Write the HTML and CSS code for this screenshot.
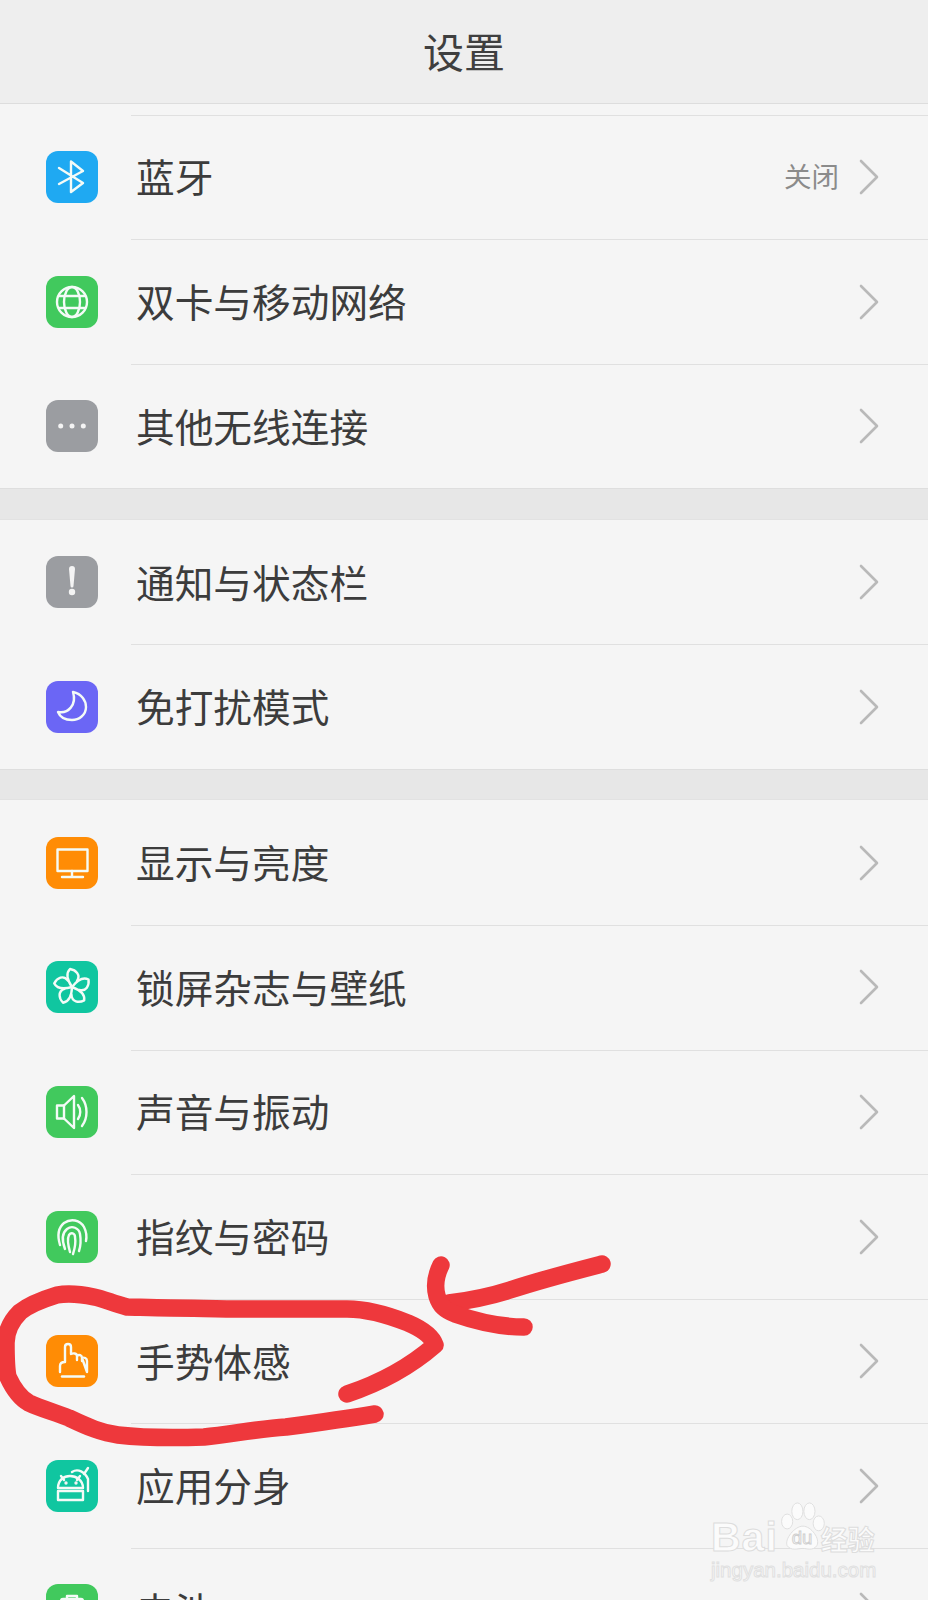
FILE: index.html
```html
<!DOCTYPE html>
<html lang="zh-CN">
<head>
  <meta charset="UTF-8" />
  <title>设置</title>
  <link rel="stylesheet" href="styles.css">
</head>
<body>
  <div class="screen">
    <header class="titlebar">设置</header>
    <div class="top-strip"></div>

    <section class="group">
      <div class="row">
        <span class="icon blue"><svg viewBox="0 0 52 52"><path d="M13 17 37 32 25 41V10.500L37 20 13 33"/></svg></span>
        <span class="label">蓝牙</span>
        <span class="value">关闭</span>
        <svg class="chevron" viewBox="0 0 20 36"><path d="M2 2 18 18 2 34"/></svg>
      </div>
      <div class="row">
        <span class="icon green"><svg viewBox="0 0 52 52"><circle cx="26" cy="26" r="15"/><ellipse cx="26" cy="26" rx="8" ry="15"/><path d="M13 20H39M13 32H39"/></svg></span>
        <span class="label">双卡与移动网络</span>
        <svg class="chevron" viewBox="0 0 20 36"><path d="M2 2 18 18 2 34"/></svg>
      </div>
      <div class="row">
        <span class="icon gray"><svg viewBox="0 0 52 52"><g class="solid"><circle cx="14.700" cy="26" r="2.500"/><circle cx="26" cy="26" r="2.500"/><circle cx="37.300" cy="26" r="2.500"/></g></svg></span>
        <span class="label">其他无线连接</span>
        <svg class="chevron" viewBox="0 0 20 36"><path d="M2 2 18 18 2 34"/></svg>
      </div>
    </section>

    <section class="group">
      <div class="row">
        <span class="icon gray"><svg viewBox="0 0 52 52"><g class="solid"><path d="M23 13a3 3 0 0 1 6 0L27.500 30a1.500 1.500 0 0 1-3 0Z"/><circle cx="26" cy="36" r="3.200"/></g></svg></span>
        <span class="label">通知与状态栏</span>
        <svg class="chevron" viewBox="0 0 20 36"><path d="M2 2 18 18 2 34"/></svg>
      </div>
      <div class="row">
        <span class="icon violet"><svg viewBox="0 0 52 52"><path d="M27 11C36 13 40 20 40 26 40 34 33 39 26 39 19 39 14 36 12 31 22 33 31 24 27 11Z"/></svg></span>
        <span class="label">免打扰模式</span>
        <svg class="chevron" viewBox="0 0 20 36"><path d="M2 2 18 18 2 34"/></svg>
      </div>
    </section>

    <section class="group">
      <div class="row">
        <span class="icon orange"><svg viewBox="0 0 52 52"><rect x="11.500" y="12.500" width="30" height="21.500"/><path d="M26 34V40M16 40H37"/></svg></span>
        <span class="label">显示与亮度</span>
        <svg class="chevron" viewBox="0 0 20 36"><path d="M2 2 18 18 2 34"/></svg>
      </div>
      <div class="row">
        <span class="icon teal"><svg viewBox="0 0 52 52"><path d="M26 26C22 20 19 13 24 8 30 9 35 14 31 20"/><path transform="rotate(72 26 26)" d="M26 26C22 20 19 13 24 8 30 9 35 14 31 20"/><path transform="rotate(144 26 26)" d="M26 26C22 20 19 13 24 8 30 9 35 14 31 20"/><path transform="rotate(216 26 26)" d="M26 26C22 20 19 13 24 8 30 9 35 14 31 20"/><path transform="rotate(288 26 26)" d="M26 26C22 20 19 13 24 8 30 9 35 14 31 20"/></svg></span>
        <span class="label">锁屏杂志与壁纸</span>
        <svg class="chevron" viewBox="0 0 20 36"><path d="M2 2 18 18 2 34"/></svg>
      </div>
      <div class="row">
        <span class="icon green"><svg viewBox="0 0 52 52"><path d="M11 19.500H18L28 10V42L18 32.500H11Z"/><path d="M18 19.500V32.500"/><path d="M32 19C35 23 35 29 32 33M36 12C42 20 42 32 36 40"/></svg></span>
        <span class="label">声音与振动</span>
        <svg class="chevron" viewBox="0 0 20 36"><path d="M2 2 18 18 2 34"/></svg>
      </div>
      <div class="row">
        <span class="icon green"><svg viewBox="0 0 52 52"><path d="M14 34C11 24 12 17 18 12 25 7 34 9 38 16 40 20 41 25 40 30"/><path d="M19 38C16 30 16 22 21 18 26 14 33 17 34 23 35 29 35 34 33 40"/><path d="M24 41C22 34 21 28 23 24 25 21 29 22 29 26 30 32 29 37 27 43"/></svg></span>
        <span class="label">指纹与密码</span>
        <svg class="chevron" viewBox="0 0 20 36"><path d="M2 2 18 18 2 34"/></svg>
      </div>
      <div class="row">
        <span class="icon orange"><svg viewBox="0 0 52 52"><path d="M14 37V31C14 28 16 27 19 27V12C19 8 25 8 25 12V19C27 18 31 18 31 21V25M31 21C33 19 36 20 36 23V26M36 23C38 22 41 23 41 26V37Z"/><path d="M16 41.500H38"/></svg></span>
        <span class="label">手势体感</span>
        <svg class="chevron" viewBox="0 0 20 36"><path d="M2 2 18 18 2 34"/></svg>
      </div>
      <div class="row">
        <span class="icon teal"><svg viewBox="0 0 52 52"><path d="M12 28C12 20 18 16 24 16 30 16 37 20 37 28Z"/><path d="M12 31H37V40H12Z"/><path d="M15 16 18 20M34 16 31 20"/><path d="M26 12C32 8 39 12 42 19V31M38 14 42 8"/><g class="solid"><circle cx="20" cy="23" r="1.700"/><circle cx="30" cy="23" r="1.700"/></g></svg></span>
        <span class="label">应用分身</span>
        <svg class="chevron" viewBox="0 0 20 36"><path d="M2 2 18 18 2 34"/></svg>
      </div>
      <div class="row">
        <span class="icon green"><svg viewBox="0 0 52 52"><rect x="15" y="15" width="22" height="27" rx="2"/><path d="M21 15V12H31V15"/></svg></span>
        <span class="label">电池</span>
        <svg class="chevron" viewBox="0 0 20 36"><path d="M2 2 18 18 2 34"/></svg>
      </div>
    </section>

    <!-- marker drawn over the screenshot -->
    <svg class="marker" viewBox="0 0 928 1600">
      <path d="M347 1394C380 1383 412 1365 435 1345 432 1336 422 1329 408 1323 388 1315 368 1309 347 1309H245C215 1309 195 1308 171 1308 150 1308 136 1307 127 1307 112 1303 104 1299 94 1297 80 1294 68 1293 57 1295 44 1299 30 1304 20 1312 10 1322 6 1332 6 1343 6 1356 6 1368 8 1377 14 1390 20 1398 29 1403 42 1409 54 1412 69 1418 88 1427 102 1433 118 1435 145 1438 175 1438 204 1437 232 1434 258 1429 286 1427 316 1423 345 1419 375 1414"/>
      <path d="M602 1264C575 1271 540 1280 510 1290 485 1298 465 1301 449 1303"/>
      <path d="M441 1265C436 1275 434 1285 437 1296 440 1306 445 1310 455 1314 478 1322 500 1327 524 1327"/>
    </svg>

    <div class="watermark">
      <div class="wm-top">
        <span class="wm-brand">Bai</span>
        <svg class="wm-paw" viewBox="0 0 56 56">
          <ellipse cx="12" cy="21" rx="6" ry="8"/>
          <ellipse cx="23" cy="10" rx="6" ry="9"/>
          <ellipse cx="36" cy="10" rx="6" ry="9"/>
          <ellipse cx="46" cy="23" rx="6" ry="8"/>
          <path d="M29 26C38 26 48 40 44 47 40 53 33 50 29 50 24 50 16 53 12 47 9 40 20 26 29 26Z"/>
          <text x="28" y="45" text-anchor="middle">du</text>
        </svg>
        <span class="wm-cn">经验</span>
      </div>
      <div class="wm-url">jingyan.baidu.com</div>
    </div>
  </div>
</body>
</html>
```

FILE: styles.css
```css
* {
  box-sizing: border-box;
}
body {
  margin: 0;
  font-family: "Noto Sans CJK SC", "Noto Sans", sans-serif;
  background: #e7e7e7;
}
.screen {
  position: relative;
  width: 928px;
  height: 1600px;
  overflow: hidden;
  background: #e7e7e7;
}
.titlebar {
  height: 104px;
  padding-top: 23px;
  background: #eeeeee;
  border-bottom: 1px solid #dddddd;
  text-align: center;
  font-size: 41px;
  line-height: 54px;
  color: #3f3f3f;
}
.top-strip {
  height: 10.700px;
  background: #f5f5f5;
}
.group {
  margin-bottom: 30.400px;
  background: #f5f5f5;
  border-bottom: 1px solid #dedede;
}
.group + .group {
  border-top: 1px solid #e2e2e2;
  margin-top: -1px;
}
.row {
  position: relative;
  height: 124.600px;
  display: flex;
  align-items: center;
  padding-left: 46px;
  padding-right: 49px;
}
.row::before {
  content: "";
  position: absolute;
  left: 131px;
  right: 0;
  top: 0;
  border-top: 1px solid #e0e0e0;
}
.group + .group .row:first-child::before {
  display: none;
}
.icon {
  flex: none;
  width: 52px;
  height: 52px;
  border-radius: 12px;
  margin-right: 38px;
}
.icon svg {
  display: block;
  width: 52px;
  height: 52px;
  fill: none;
  stroke: #f4fbf7;
  stroke-width: 2.400;
  stroke-linecap: round;
  stroke-linejoin: round;
}
.icon .solid {
  fill: #f4f4f4;
  stroke: none;
}
.blue { background: #1fa9f2; }
.green { background: #41c95d; }
.gray { background: #9b9da1; }
.violet { background: #6b66f5; }
.orange { background: #ff8c05; }
.teal { background: #10c6a0; }
.label {
  flex: 1;
  padding-bottom: 3px;
  font-size: 38.700px;
  line-height: 50px;
  color: #3c3c3c;
  white-space: nowrap;
}
.value {
  padding-bottom: 3px;
  font-size: 27.500px;
  color: #8b8b8b;
  margin-right: 20px;
}
.chevron {
  flex: none;
  width: 20px;
  height: 36px;
  fill: none;
  stroke: #b9b9b9;
  stroke-width: 2.600;
  stroke-linecap: round;
  stroke-linejoin: round;
}
.marker {
  position: absolute;
  left: 0;
  top: 0;
  width: 928px;
  height: 1600px;
  fill: none;
  stroke: #ee383c;
  stroke-width: 17.500;
  stroke-linecap: round;
  stroke-linejoin: round;
}
.watermark {
  position: absolute;
  left: 711px;
  top: 1500px;
  width: 170px;
  color: #fbfbfb;
}
.wm-top {
  display: flex;
  align-items: flex-end;
  height: 56px;
}
.wm-brand {
  font-family: "Liberation Sans", sans-serif;
  font-weight: bold;
  font-size: 41px;
  line-height: 38px;
  letter-spacing: 1px;
  -webkit-text-stroke: 1px #dddddd;
}
.wm-paw {
  width: 52px;
  height: 56px;
  margin-left: -2px;
  fill: #fbfbfb;
  stroke: #dddddd;
  stroke-width: 1;
}
.wm-paw text {
  font-family: "Liberation Sans", sans-serif;
  font-size: 20px;
  fill: #fbfbfb;
  stroke: #cfcfcf;
}
.wm-cn {
  font-size: 27px;
  line-height: 34px;
  font-weight: bold;
  margin-left: -7px;
  -webkit-text-stroke: 1px #dddddd;
}
.wm-url {
  margin-top: 2px;
  font-family: "Liberation Sans", sans-serif;
  font-size: 20.500px;
  line-height: 24px;
  -webkit-text-stroke: 1px #e0e0e0;
  white-space: nowrap;
}
```
